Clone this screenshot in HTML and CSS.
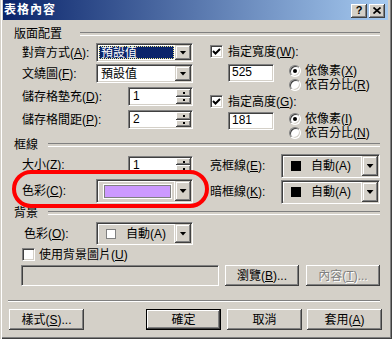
FILE: index.html
```html
<!DOCTYPE html>
<html lang="zh-Hant">
<head>
    <meta charset="UTF-8">
    <title>表格內容</title>
    <link rel="stylesheet" href="styles.css">
</head>
<body>
<div class="window">
    <div class="titlebar">
        <span class="title">表格內容</span>
        <span class="title-btns">
            <span class="tbtn help">?</span>
            <span class="tbtn"><svg width="8" height="7" viewBox="0 0 8 7"><path d="M0.5 0.5 L7.5 6.5 M7.5 0.5 L0.5 6.5" stroke="#000" stroke-width="1.7"/></svg></span>
        </span>
    </div>

    <div class="content">
        <!-- 版面配置 -->
        <div class="group-title wide">版面配置</div>
        <div class="cols sec-layout">
            <div class="col">
                <div class="frow mt2">
                    <span class="lbl">對齊方式(<u>A</u>):</span>
                    <div class="combo"><span class="combo-val"><span class="sel">預設值</span></span><span class="drop"><i></i></span></div>
                </div>
                <div class="frow mt2">
                    <span class="lbl">文繞圖(<u>F</u>):</span>
                    <div class="combo"><span class="combo-val plain">預設值</span><span class="drop"><i></i></span></div>
                </div>
                <div class="frow mt4">
                    <span class="lbl">儲存格墊充(<u>D</u>):</span>
                    <div class="spin"><span class="spin-val">1</span><span class="spin-btns"><b></b><b></b></span></div>
                </div>
                <div class="frow mt4">
                    <span class="lbl">儲存格間距(<u>P</u>):</span>
                    <div class="spin"><span class="spin-val">2</span><span class="spin-btns"><b></b><b></b></span></div>
                </div>
            </div>
            <div class="col">
                <div class="check-row mt4">
                    <span class="check"><svg width="9" height="9" viewBox="0 0 9 9"><path d="M1 4 L3.5 6.5 L8 2" fill="none" stroke="#000" stroke-width="2"/></svg></span>
                    <span>指定寬度(<u>W</u>):</span>
                </div>
                <div class="size-row mt6">
                    <span class="textbox">525</span>
                    <div class="radios">
                        <div class="radio-line"><span class="radio on"></span>依像素(<u>X</u>)</div>
                        <div class="radio-line"><span class="radio"></span>依百分比(<u>R</u>)</div>
                    </div>
                </div>
                <div class="check-row mt3">
                    <span class="check"><svg width="9" height="9" viewBox="0 0 9 9"><path d="M1 4 L3.5 6.5 L8 2" fill="none" stroke="#000" stroke-width="2"/></svg></span>
                    <span>指定高度(<u>G</u>):</span>
                </div>
                <div class="size-row mt4">
                    <span class="textbox">181</span>
                    <div class="radios">
                        <div class="radio-line"><span class="radio on"></span>依像素(<u>I</u>)</div>
                        <div class="radio-line"><span class="radio"></span>依百分比(<u>N</u>)</div>
                    </div>
                </div>
            </div>
        </div>

        <!-- 框線 -->
        <div class="group-title">框線</div>
        <div class="cols sec-border">
            <div class="col">
                <div class="frow mt4">
                    <span class="lbl">大小(<u>Z</u>):</span>
                    <div class="spin short"><span class="spin-val">1</span><span class="spin-btns"><b></b><b></b></span></div>
                </div>
                <div class="frow mt5">
                    <span class="lbl">色彩(<u>C</u>):</span>
                    <div class="combo tall"><span class="combo-val face"><span class="swatch"></span></span><span class="drop"><i></i></span></div>
                </div>
            </div>
            <div class="col">
                <div class="frow flush mt2">
                    <span class="lbl">亮框線(<u>E</u>):</span>
                    <div class="combo tall wide"><span class="combo-val face"><span class="chip black"></span>自動(A)</span><span class="drop"><i></i></span></div>
                </div>
                <div class="frow flush mt2">
                    <span class="lbl">暗框線(<u>K</u>):</span>
                    <div class="combo tall wide"><span class="combo-val face"><span class="chip black"></span>自動(A)</span><span class="drop"><i></i></span></div>
                </div>
            </div>
        </div>

        <!-- 背景 -->
        <div class="group-title mt2">背景</div>
        <div class="frow half bg-color mt2">
            <span class="lbl">色彩(<u>O</u>):</span>
            <div class="combo mid"><span class="combo-val face"><span class="chip"></span>自動(A)</span><span class="drop"><i></i></span></div>
        </div>
        <div class="check-row pad8 mt3">
            <span class="check"></span>
            <span>使用背景圖片(<u>U</u>)</span>
        </div>
        <div class="browse-row mt4">
            <span class="textbox disabled"></span>
            <span class="btn browse">瀏覽(<u>B</u>)...</span>
            <span class="btn disabled props">內容(<u>T</u>)...</span>
        </div>
    </div>

    <div class="footer">
        <div class="sep"></div>
        <div class="footer-btns">
            <span class="btn style-btn">樣式(<u>S</u>)...</span>
            <span class="btn default ok-btn">確定</span>
            <span class="btn cancel-btn">取消</span>
            <span class="btn apply-btn">套用(<u>A</u>)</span>
        </div>
    </div>

    <div class="annotation"></div>
</div>
</body>
</html>
```

FILE: styles.css
```css
* {
    box-sizing: border-box;
}

body {
    margin: 0;
    background: #d4d0c8;
    font-family: "Liberation Sans", "Noto Sans CJK TC", sans-serif;
    font-size: 12px;
    line-height: 14px;
    color: #000;
}

u {
    text-decoration: underline;
    text-underline-offset: 1px;
}

.window {
    position: relative;
    width: 392px;
    height: 339px;
    padding: 0 4px 0 3px;
    background: #d4d0c8;
    box-shadow: inset 1px 0 #d4d0c8, inset 2px 0 #fff, inset -1px -1px #404040, inset -2px -2px #808080;
    overflow: hidden;
}

/* title bar */
.titlebar {
    display: flex;
    align-items: center;
    justify-content: space-between;
    height: 20px;
    padding: 0 3px 0 1px;
    background: linear-gradient(to right, #0a246a, #a6caf0);
}

.title {
    color: #fff;
    font-weight: bold;
    letter-spacing: 1px;
}

.title-btns {
    display: flex;
    gap: 2px;
    margin-top: 1px;
}

.tbtn {
    display: flex;
    align-items: center;
    justify-content: center;
    width: 16px;
    height: 14px;
    background: #d4d0c8;
    box-shadow: inset -1px -1px #404040, inset 1px 1px #fff, inset -2px -2px #808080;
}

.tbtn.help {
    font: bold 11px "Liberation Sans", sans-serif;
    padding-bottom: 1px;
}

/* content */
.content {
    padding: 7px 8px 0 11px;
}

.group-title {
    display: flex;
    align-items: center;
    height: 14px;
}

.group-title::after {
    content: "";
    flex: 1;
    height: 2px;
    margin-left: 10px;
    border-top: 1px solid #808080;
    border-bottom: 1px solid #fff;
}

.group-title.wide::after {
    margin-left: 18px;
}

.cols {
    display: grid;
    grid-template-columns: 179px 170px;
    column-gap: 17px;
}

.sec-layout {
    height: 97px;
}

.sec-border {
    height: 52px;
}

.mt2 { margin-top: 2px; }
.mt3 { margin-top: 3px; }
.mt4 { margin-top: 4px; }
.mt5 { margin-top: 5px; }
.mt6 { margin-top: 6px; }

.frow {
    display: flex;
    align-items: center;
    justify-content: space-between;
    padding-left: 8px;
}

.frow.flush {
    padding-left: 0;
}

.frow.half {
    width: 179px;
    padding-left: 10px;
}

.lbl {
    white-space: nowrap;
}

/* sunken field frame */
.combo,
.spin,
.textbox,
.check {
    border: 1px solid;
    border-color: #808080 #fff #fff #808080;
    box-shadow: inset 1px 1px #404040, inset -1px -1px #d4d0c8;
    background: #fff;
}

.combo {
    display: flex;
    width: 97px;
    height: 19px;
    padding: 1px;
}

.combo.tall {
    height: 24px;
}

.combo.mid {
    height: 23px;
}

.combo.wide {
    width: 99px;
}

.combo-val {
    flex: 1;
    display: flex;
    align-items: center;
    padding: 1px;
}

.combo-val.plain {
    padding-left: 3px;
}

.combo-val.face {
    background: #d4d0c8;
    padding: 0 0 0 7px;
    border: 1px solid;
    border-color: #fff #fff #d4d0c8 #fff;
}

.sel {
    flex: 1;
    align-self: stretch;
    display: flex;
    align-items: center;
    padding-left: 2px;
    background: #0a246a;
    color: #fff;
    outline: 1px dotted #f2e98a;
    outline-offset: -1px;
}

.drop {
    display: flex;
    align-items: center;
    justify-content: center;
    width: 16px;
    background: #d4d0c8;
    box-shadow: inset -1px -1px #404040, inset 1px 1px #d4d0c8, inset -2px -2px #808080, inset 2px 2px #fff;
}

.drop i {
    width: 7px;
    height: 4px;
    background: #000;
    clip-path: polygon(0 0, 100% 0, 50% 100%);
}

.swatch {
    width: 67px;
    height: 13px;
    margin-left: -2px;
    border: 1px solid #808080;
    box-shadow: 0 0 0 1px #fff;
    background: #cc99ff;
}

.chip {
    width: 10px;
    height: 10px;
    margin-right: 10px;
    border: 1px solid #808080;
    background: #fff;
}

.chip.black {
    background: #000;
    border-color: #000;
}

/* spin boxes */
.spin {
    display: flex;
    width: 65px;
    height: 19px;
    padding: 1px;
}

.spin.short {
    height: 18px;
}

.spin-val {
    flex: 1;
    padding-left: 3px;
    line-height: 15px;
}

.spin-btns {
    display: flex;
    flex-direction: column;
    width: 15px;
}

.spin-btns b {
    flex: 1;
    display: flex;
    align-items: center;
    justify-content: center;
    background: #d4d0c8;
    box-shadow: inset -1px -1px #404040, inset 1px 1px #fff, inset -2px -2px #808080;
}

.spin-btns b::after {
    content: "";
    width: 2px;
    height: 2px;
    background: #000;
}

/* checks and radios */
.check-row {
    display: flex;
    align-items: center;
    height: 13px;
}

.check-row.pad8 {
    padding-left: 8px;
}

.check {
    display: flex;
    align-items: center;
    justify-content: center;
    flex-shrink: 0;
    width: 13px;
    height: 13px;
    margin-right: 5px;
}

.pad8 .check {
    margin-right: 4px;
}

.size-row {
    display: flex;
    align-items: flex-start;
}

.textbox {
    width: 46px;
    height: 18px;
    margin-left: 18px;
    padding-left: 3px;
    line-height: 15px;
}

.textbox.disabled {
    width: 198px;
    height: 21px;
    margin-left: 0;
    background: #d4d0c8;
}

.radios {
    margin-left: 15px;
}

.radio-line {
    display: flex;
    align-items: center;
    height: 14px;
    white-space: nowrap;
}

.radio {
    position: relative;
    flex-shrink: 0;
    width: 12px;
    height: 12px;
    margin-right: 4px;
    border-radius: 50%;
    border: 1px solid;
    border-color: #808080 #fff #fff #808080;
    box-shadow: inset 1px 1px #404040, inset -1px -1px #d4d0c8;
    background: #fff;
}

.radio.on::after {
    content: "";
    position: absolute;
    left: 3px;
    top: 3px;
    width: 4px;
    height: 4px;
    border-radius: 50%;
    background: #000;
}

/* buttons */
.browse-row {
    display: flex;
    padding-left: 7px;
}

.btn {
    display: flex;
    align-items: center;
    justify-content: center;
    flex-shrink: 0;
    width: 74px;
    height: 21px;
    background: #d4d0c8;
    box-shadow: inset -1px -1px #404040, inset 1px 1px #fff, inset -2px -2px #808080;
    white-space: nowrap;
}

.btn.disabled {
    color: #808080;
    text-shadow: 1px 1px #fff;
}

.btn.default {
    border: 1px solid #000;
}

.browse {
    margin-left: 6px;
}

.props {
    margin-left: 7px;
}

.footer {
    margin-top: 14px;
    padding: 0 8px 0 5px;
}

.sep {
    height: 2px;
    border-top: 1px solid #808080;
    border-bottom: 1px solid #fff;
}

.footer-btns {
    display: flex;
    margin-top: 7px;
}

.footer-btns .btn {
    width: 75px;
}

.style-btn { margin-left: 1px; }
.ok-btn { margin-left: 62px; }
.cancel-btn { margin-left: 6px; }
.apply-btn { margin-left: 5px; }

/* red highlight drawn over the dialog */
.annotation {
    position: absolute;
    left: 12px;
    top: 170px;
    width: 197px;
    height: 38px;
    border: 4px solid #f00;
    border-radius: 19px;
    pointer-events: none;
}
```
